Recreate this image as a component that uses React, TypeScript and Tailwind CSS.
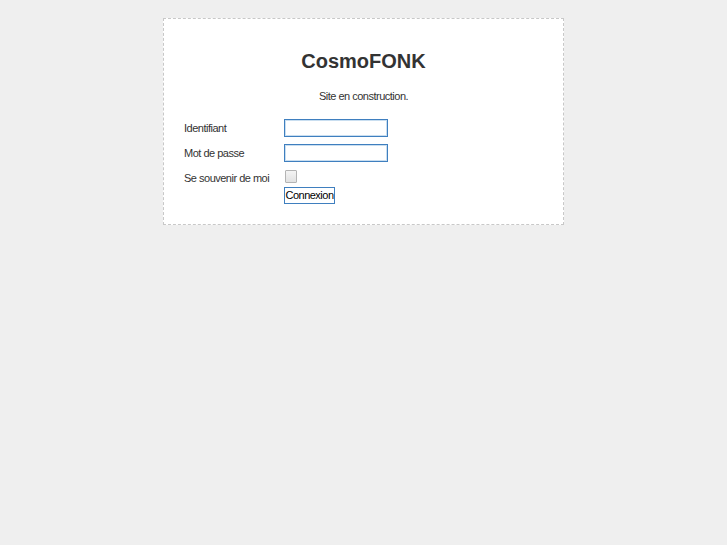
import { useState } from 'react';

export default function App() {
  const [login, setLogin] = useState('');
  const [password, setPassword] = useState('');
  const [remember, setRemember] = useState(false);

  return (
    <div className="min-h-screen bg-[#efefef] pt-[18px] font-['Liberation_Sans',Arial,sans-serif] text-[11px] tracking-[-0.5px] text-[#333]">
      {/* Boîte de connexion */}
      <div className="mx-auto w-[401px] h-[207px] bg-white border border-dashed border-[#c8c8c8] px-[20px] pt-[31px]">
        <h1 className="text-center text-[20px] leading-[23px] font-bold tracking-normal text-[#333]">CosmoFONK</h1>
        <p className="mt-[17px] text-center leading-[13px] text-[#333]">Site en construction.</p>

        <form className="mt-[16px]" onSubmit={(e) => e.preventDefault()}>
          <div className="flex items-center h-[18px]">
            <label className="w-[100px] leading-[13px]">Identifiant</label>
            <input
              value={login}
              onChange={(e) => setLogin(e.target.value)}
              className="w-[104px] h-[18px] border border-[#3f7fbf] bg-white outline-none shadow-[inset_0_0_0_1px_#c9def0] px-1 text-[11px]"
            />
          </div>
          <div className="flex items-center h-[18px] mt-[7px]">
            <label className="w-[100px] leading-[13px]">Mot de passe</label>
            <input
              type="password"
              value={password}
              onChange={(e) => setPassword(e.target.value)}
              className="w-[104px] h-[18px] border border-[#3f7fbf] bg-white outline-none shadow-[inset_0_0_0_1px_#c9def0] px-1 text-[11px]"
            />
          </div>
          <div className="flex items-start mt-[8px]">
            <label className="w-[100px] leading-[13px] pt-[2px]">Se souvenir de moi</label>
            <div className="flex flex-col items-start">
              <button
                type="button"
                onClick={() => setRemember(!remember)}
                className="ml-[1px] w-[12px] h-[13px] border border-[#b4b4b4] rounded-[1px] bg-gradient-to-b from-[#f4f4f4] to-[#e2e2e2] flex items-center justify-center text-[9px] leading-none text-[#333]"
              >
                {remember ? '✓' : ''}
              </button>
              <button
                type="submit"
                className="mt-[4px] w-[51px] h-[17px] border border-[#3f7fbf] bg-white text-[11px] leading-[13px] tracking-[-0.5px] text-black px-0 text-center"
              >
                Connexion
              </button>
            </div>
          </div>
        </form>
      </div>
    </div>
  );
}
